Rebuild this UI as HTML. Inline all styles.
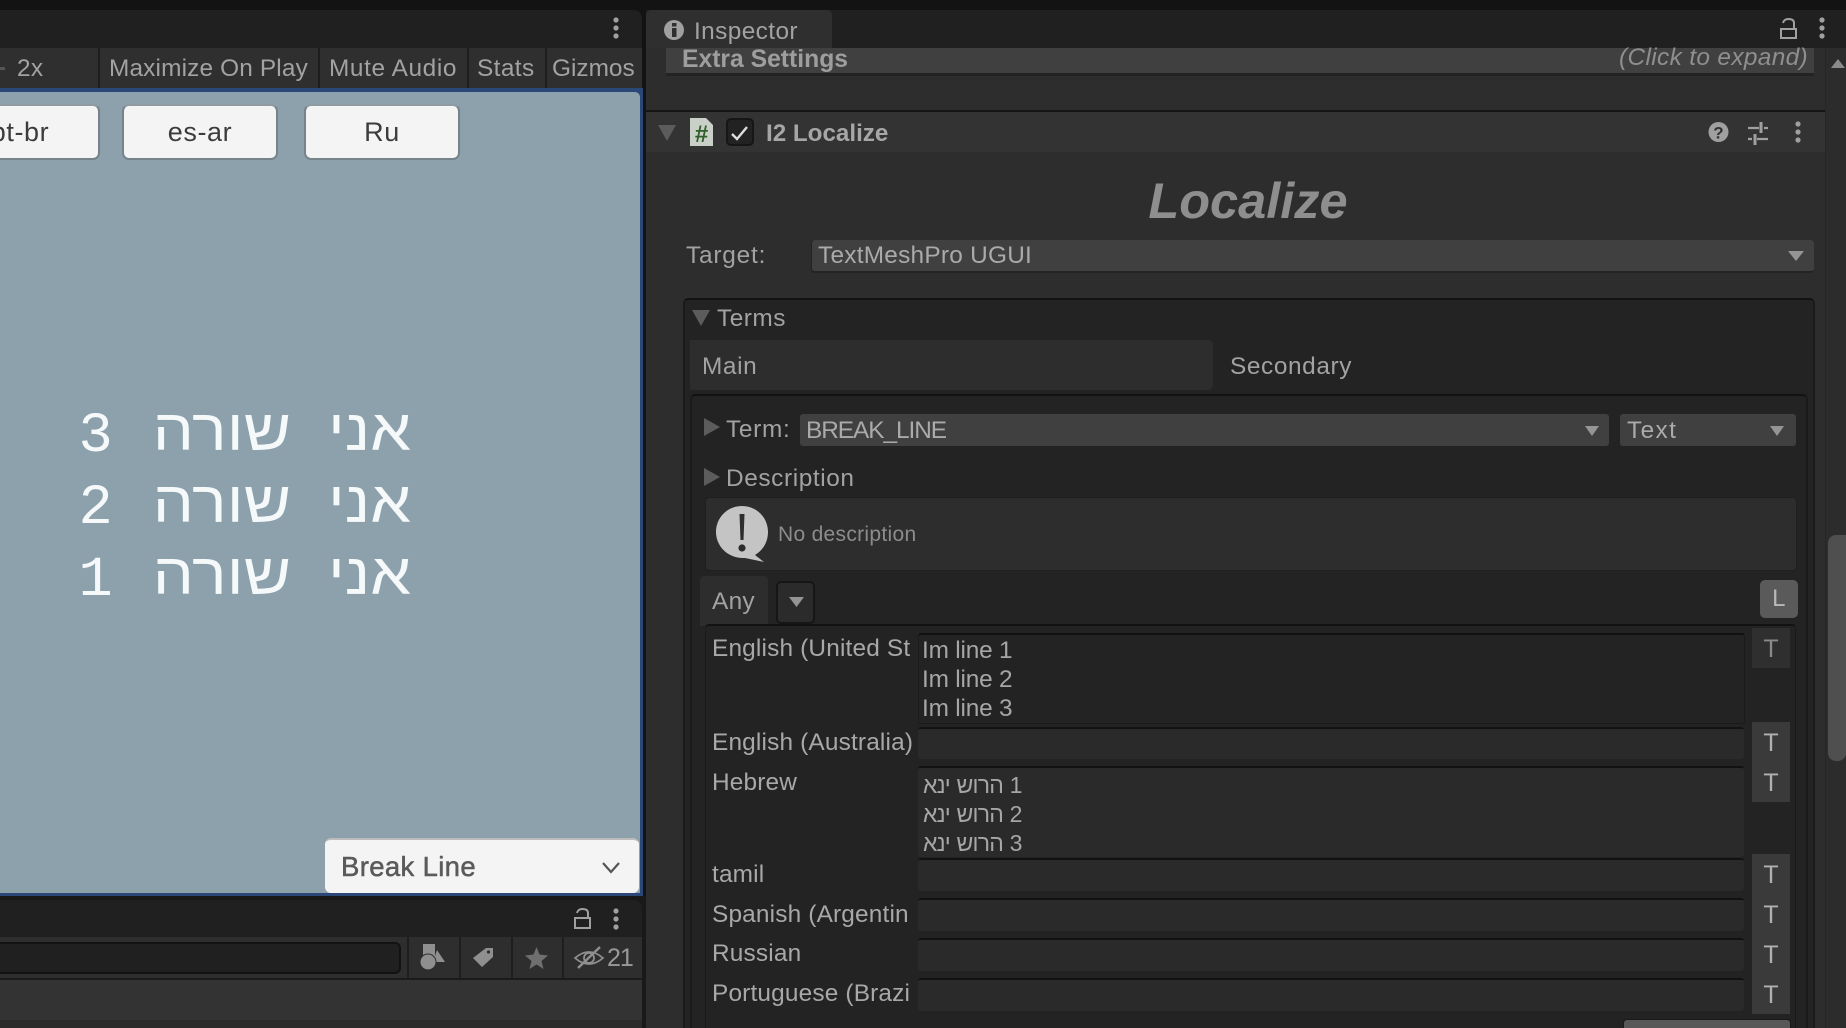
<!DOCTYPE html>
<html><head><meta charset="utf-8">
<style>
html,body{margin:0;padding:0;background:#131313;width:1846px;height:1028px;overflow:hidden}
body{position:relative;font-family:"Liberation Sans",sans-serif;font-size:24.4px;letter-spacing:.3px;color:#a2a2a2}
div,span,svg{position:absolute;box-sizing:border-box}
.t{line-height:30px;height:30px;white-space:nowrap}
.d{left:0;top:0}
.fld{left:918px;width:826px;background:#2a2a2a;border-top:2px solid #121212;border-radius:3px}
.lab{left:712px;width:198px;overflow:hidden;color:#a8a8a8;letter-spacing:.17px}
.tb{left:1752px;width:38px}
.tt{left:1752px;width:38px;text-align:center;color:#b0b0b0;font-size:25px;line-height:30px;height:30px;letter-spacing:0}
.sep{width:2px;background:#1e1e1e}
.btn{background:#f4f4f4;border:2px solid #76838b;border-top-color:#8f9aa1;border-radius:7px;height:56px;top:104px;text-align:center;color:#3c3c3c;font-size:27px;line-height:52px;letter-spacing:.6px}
.dg{left:78.5px;height:72px;line-height:72px;font-family:"Liberation Mono",monospace;font-size:57px;letter-spacing:0;color:#f6f9fa}
.hw{width:200px;height:72px;line-height:72px;font-size:58px;letter-spacing:0;color:#f6f9fa;direction:rtl;text-align:right;white-space:nowrap;transform-origin:100% 50%;transform:scaleX(1.12)}
.w1{left:211px}
.w2{left:91px}
.hf{left:922px;color:#a6a6a6;letter-spacing:-.2px}
.hb{left:923px;color:#a6a6a6;font-size:23px;unicode-bidi:bidi-override;direction:ltr;letter-spacing:-.8px;word-spacing:1px}
</style></head><body>

<!-- LEFT PANEL -->
<div style="left:0;top:10px;width:642px;height:38px;background:#202020;border-radius:0 8px 0 0"></div>
<div style="left:0;top:48px;width:642px;height:40px;background:#2f2f2f"></div>
<div class="sep" style="left:98px;top:48px;height:40px"></div>
<div class="sep" style="left:318px;top:48px;height:40px"></div>
<div class="sep" style="left:467px;top:48px;height:40px"></div>
<div class="sep" style="left:545px;top:48px;height:40px"></div>
<div style="left:0;top:67px;width:5px;height:3px;background:#555"></div>
<span class="t" style="left:17px;top:54px">2x</span>
<span class="t" style="left:109px;top:54px;letter-spacing:.15px">Maximize On Play</span>
<span class="t" style="left:329px;top:54px;letter-spacing:.6px">Mute Audio</span>
<span class="t" style="left:477px;top:54px;letter-spacing:.4px">Stats</span>
<span class="t" style="left:552px;top:54px;letter-spacing:0">Gizmos</span>
<svg class="d" width="646" height="50" style="left:0;top:0"><g fill="#a0a0a0"><circle cx="616" cy="20" r="2.6"/><circle cx="616" cy="28" r="2.6"/><circle cx="616" cy="36" r="2.6"/></g></svg>

<!-- GAME VIEW -->
<div style="left:0;top:88px;width:643px;height:808px;background:#2b4777"></div>
<div style="left:0;top:92px;width:640px;height:801px;background:#8da1ad;border-radius:0 5px 0 0"></div>
<div class="btn" style="left:-60px;width:160px">pt-br</div>
<div class="btn" style="left:122px;width:156px">es-ar</div>
<div class="btn" style="left:304px;width:156px">Ru</div>
<span class="dg" style="top:401px">3</span><span class="hw w2" style="top:395px">שורה</span><span class="hw w1" style="top:395px">אני</span>
<span class="dg" style="top:473px">2</span><span class="hw w2" style="top:467px">שורה</span><span class="hw w1" style="top:467px">אני</span>
<span class="dg" style="top:545px">1</span><span class="hw w2" style="top:539px">שורה</span><span class="hw w1" style="top:539px">אני</span>
<div style="left:325px;top:838px;width:314px;height:55px;background:#f4f4f4;border-radius:6px;border-top:2px solid #bcbcbc"></div>
<span class="t" style="left:341px;top:852px;font-size:27.5px;color:#5a5a5a;-webkit-text-stroke:.5px #5a5a5a;letter-spacing:.35px">Break Line</span>
<svg class="d" width="30" height="20" style="left:599px;top:858px"><path d="M4 5 L12 14 L20 5" fill="none" stroke="#555" stroke-width="2.2"/></svg>

<!-- BOTTOM LEFT -->
<div style="left:0;top:896px;width:646px;height:132px;background:#191919"></div>
<div style="left:0;top:900px;width:642px;height:37px;background:#202020;border-radius:0 8px 0 0"></div>
<div style="left:0;top:937px;width:642px;height:41px;background:#2e2e2e"></div>
<div style="left:0;top:942px;width:401px;height:32px;background:#202020;border:2px solid #121212;border-left:0;border-radius:0 6px 6px 0"></div>
<div class="sep" style="left:407px;top:937px;height:41px"></div>
<div class="sep" style="left:459px;top:937px;height:41px"></div>
<div class="sep" style="left:511px;top:937px;height:41px"></div>
<div class="sep" style="left:562px;top:937px;height:41px"></div>
<div style="left:0;top:978px;width:642px;height:2px;background:#1b1b1b"></div>
<div style="left:0;top:980px;width:642px;height:40px;background:#333"></div>
<div style="left:0;top:1020px;width:642px;height:8px;background:#2b2b2b"></div>
<span class="t" style="left:607px;top:943px;color:#999;font-size:25px;letter-spacing:-1px">21</span>
<svg class="d" width="646" height="1028" style="left:0;top:0">
  <g fill="none" stroke="#a0a0a0" stroke-width="2"><rect x="575" y="918" width="15" height="10"/><path d="M588 918 V913 Q588 909 582.500 909 Q578 909 577 913"/></g>
  <g fill="#a0a0a0"><circle cx="616" cy="911" r="2.6"/><circle cx="616" cy="919" r="2.6"/><circle cx="616" cy="927" r="2.6"/></g>
  <g fill="#8f8f8f"><rect x="423" y="944" width="12" height="13"/><path d="M437 950 L445 962 H433 Z"/><circle cx="428" cy="962" r="8" stroke="#2e2e2e" stroke-width="1"/></g>
  <path d="M473 958 L486 948 H493 V957 L482 967 Z" fill="#8f8f8f"/><circle cx="488.500" cy="952" r="1.6" fill="#2e2e2e"/>
  <path d="M536.500 947 L539.500 954.500 L548 955.500 L541.500 961 L543.500 969 L536.500 964.500 L529.500 969 L531.500 961 L525 955.500 L533.500 954.500 Z" fill="#6f6f6f"/>
  <g fill="none" stroke="#8f8f8f" stroke-width="1.8"><path d="M575 958 Q589 946 603 958 Q589 970 575 958 Z"/><circle cx="589" cy="958" r="5"/><path d="M578 968 L600 947" stroke-width="2.4"/></g>
</svg>

<!-- INSPECTOR -->
<div style="left:646px;top:10px;width:1200px;height:38px;background:#202020"></div>
<div style="left:646px;top:10px;width:186px;height:38px;background:#2f2f2f;border-radius:5px 5px 0 0"></div>
<span class="t" style="left:694px;top:17px;letter-spacing:.4px">Inspector</span>
<div style="left:646px;top:48px;width:1179px;height:980px;background:#2d2d2d"></div>
<div style="left:1825px;top:48px;width:21px;height:980px;background:#2c2c2c;border-left:1px solid #262626"></div>
<div style="left:1828px;top:535px;width:18px;height:226px;background:#4f4f4f;border-radius:8px 0 8px 8px"></div>
<div style="left:666px;top:48px;width:1148px;height:28px;background:#404040;border-bottom:3px solid #232323"></div>
<span class="t" style="left:682px;top:45px;font-weight:bold;color:#9e9e9e;font-size:24.7px;letter-spacing:0">Extra Settings</span>
<span class="t" style="right:38px;top:43px;font-style:italic;color:#8f8f8f;font-size:24.4px;letter-spacing:.35px">(Click to expand)</span>
<div style="left:646px;top:110px;width:1179px;height:2px;background:#151515"></div>
<div style="left:646px;top:112px;width:1179px;height:40px;background:#333"></div>
<div style="left:766px;top:119px;font-weight:bold;line-height:30px;font-size:24.2px;letter-spacing:0;color:#a6a6a6">I2 Localize</div>
<div style="left:1048px;width:400px;top:171px;height:60px;line-height:60px;text-align:center;font-weight:bold;font-style:italic;font-size:50.5px;letter-spacing:0;color:#8e8e8e">Localize</div>

<span class="t" style="left:686px;top:241px;letter-spacing:.8px">Target:</span>
<div style="left:811px;top:240px;width:1003px;height:33px;background:#404040;border-radius:4px;border-bottom:2px solid #232323;border-left:1px solid #232323"></div>
<span class="t" style="left:818px;top:241px;color:#aaa;letter-spacing:.25px">TextMeshPro UGUI</span>

<!-- TERMS -->
<div style="left:683px;top:298px;width:1132px;height:730px;background:#232323;border-top:2px solid #121212;border-left:2px solid #1a1a1a;border-right:2px solid #1a1a1a;border-radius:5px 5px 0 0"></div>
<span class="t" style="left:717px;top:304px;letter-spacing:.5px">Terms</span>
<div style="left:690px;top:340px;width:523px;height:50px;background:#2d2d2d;border-radius:0 5px 5px 0"></div>
<span class="t" style="left:702px;top:352px;letter-spacing:.6px">Main</span>
<span class="t" style="left:1230px;top:352px;letter-spacing:.6px">Secondary</span>
<div style="left:690px;top:394px;width:1118px;height:634px;background:#232323;border-top:2px solid #121212;border-left:2px solid #1a1a1a;border-right:2px solid #1a1a1a;border-radius:5px 5px 0 0"></div>
<span class="t" style="left:726px;top:415px;letter-spacing:.7px">Term:</span>
<div style="left:800px;top:414px;width:809px;height:32px;background:#404040;border-radius:3px"></div>
<span class="t" style="left:806px;top:416px;color:#aaa;letter-spacing:-1.05px">BREAK_LINE</span>
<div style="left:1620px;top:414px;width:176px;height:32px;background:#404040;border-radius:3px"></div>
<span class="t" style="left:1627px;top:416px;color:#aaa;letter-spacing:1.4px">Text</span>
<span class="t" style="left:726px;top:464px;letter-spacing:.6px">Description</span>
<div style="left:705px;top:497px;width:1092px;height:74px;background:#2d2d2d;border:1px solid #1f1f1f;border-radius:4px"></div>
<span class="t" style="left:778px;top:520px;font-size:21px;letter-spacing:.3px;color:#8c8c8c">No description</span>
<div style="left:700px;top:576px;width:68px;height:50px;background:#2d2d2d;border-radius:4px 4px 0 0"></div>
<span class="t" style="left:712px;top:587px">Any</span>
<div style="left:776px;top:581px;width:39px;height:43px;background:#2b2b2b;border:2px solid #161616;border-radius:5px"></div>
<div style="left:1760px;top:580px;width:38px;height:38px;background:#5a5a5a;border-radius:5px;text-align:center;line-height:38px;color:#b8b8b8;font-size:24px">L</div>

<!-- LANG BOX -->
<div style="left:705px;top:624px;width:1091px;height:404px;background:#232323;border-top:2px solid #121212;border-left:1px solid #1a1a1a;border-right:1px solid #1a1a1a;border-radius:4px 4px 0 0"></div>
<span class="t lab" style="top:634px">English (United St</span>
<span class="t lab" style="top:728px;width:205px">English (Australia)</span>
<span class="t lab" style="top:768px">Hebrew</span>
<span class="t lab" style="top:860px">tamil</span>
<span class="t lab" style="top:900px">Spanish (Argentin</span>
<span class="t lab" style="top:939px">Russian</span>
<span class="t lab" style="top:979px">Portuguese (Brazi</span>

<div class="fld" style="top:633px;height:91px;background:#232323;border:1px solid #1b1b1b;border-top:2px solid #111;width:827px"></div>
<div class="fld" style="top:727px;height:32px"></div>
<div class="fld" style="top:766px;height:91px"></div>
<div class="fld" style="top:858px;height:33px"></div>
<div class="fld" style="top:898px;height:33px"></div>
<div class="fld" style="top:938px;height:33px"></div>
<div class="fld" style="top:978px;height:33px"></div>

<span class="t hf" style="top:636px">Im line 1</span>
<span class="t hf" style="top:665px">Im line 2</span>
<span class="t hf" style="top:694px">Im line 3</span>
<span class="t hb" style="top:770px">אני שורה 1</span>
<span class="t hb" style="top:799px">אני שורה 2</span>
<span class="t hb" style="top:828px">אני שורה 3</span>

<div class="tb" style="top:628px;height:40px;background:#2f2f2f"></div>
<div class="tb" style="top:722px;height:80px;background:#3a3a3a"></div>
<div class="tb" style="top:854px;height:160px;background:#3a3a3a"></div>
<div class="tt" style="top:634px;color:#8a8a8a">T</div>
<div class="tt" style="top:728px">T</div>
<div class="tt" style="top:768px">T</div>
<div class="tt" style="top:860px">T</div>
<div class="tt" style="top:900px">T</div>
<div class="tt" style="top:940px">T</div>
<div class="tt" style="top:980px">T</div>
<div style="left:1623px;top:1019px;width:168px;height:9px;background:#585858;border:1px solid #1a1a1a;border-bottom:0;border-radius:4px 4px 0 0"></div>

<!-- INSPECTOR ICONS -->
<svg class="d" width="1846" height="1028" style="left:0;top:0">
  <!-- info -->
  <circle cx="674" cy="30" r="10" fill="#a0a0a0"/>
  <rect x="672" y="28" width="4.500" height="9" fill="#2f2f2f"/><rect x="672" y="23" width="4.500" height="3.500" fill="#2f2f2f"/>
  <!-- lock -->
  <g fill="none" stroke="#a0a0a0" stroke-width="2"><rect x="1781" y="29" width="15" height="9"/><path d="M1794 29 V23 Q1794 19 1788.500 19 Q1784 19 1783 23"/></g>
  <g fill="#a0a0a0"><circle cx="1822" cy="20" r="2.6"/><circle cx="1822" cy="28" r="2.6"/><circle cx="1822" cy="36" r="2.6"/></g>
  <path d="M1831 68 L1838 59 L1845 68 Z" fill="#8a8a8a"/>
  <!-- header -->
  <path d="M658 125 H676 L667 141 Z" fill="#5c5c5c"/>
  <path d="M690 118 H706 L713 125 V146 H690 Z" fill="#c8d0c8"/>
  <text x="701.500" y="142" text-anchor="middle" font-family="Liberation Sans" font-size="24" font-weight="bold" fill="#2f5f2a" letter-spacing="0">#</text>
  <rect x="727" y="119" width="26" height="26" rx="4" fill="#222" stroke="#161616" stroke-width="2"/>
  <path d="M732 134 L737 139 L747 127" fill="none" stroke="#ddd" stroke-width="2.4"/>
  <circle cx="1718.500" cy="132" r="10" fill="#a0a0a0"/>
  <text x="1718.500" y="138.500" text-anchor="middle" font-family="Liberation Sans" font-size="17" font-weight="bold" fill="#333" letter-spacing="0">?</text>
  <g stroke="#a0a0a0" stroke-width="2.2" fill="none"><path d="M1748 128 H1759 M1764 128 H1768 M1748 139 H1752 M1757 139 H1768"/><path d="M1761 122 V133 M1755 134 V145" stroke-width="3"/></g>
  <g fill="#a0a0a0"><circle cx="1798" cy="124" r="2.6"/><circle cx="1798" cy="132" r="2.6"/><circle cx="1798" cy="140" r="2.6"/></g>
  <!-- dropdown arrows -->
  <g fill="#959595">
    <path d="M1788 251 H1804 L1796 261 Z"/>
    <path d="M1585 426 H1599 L1592 436 Z"/>
    <path d="M1770 426 H1784 L1777 436 Z"/>
    <path d="M789 597 H804 L796.500 607 Z"/>
  </g>
  <!-- foldouts -->
  <g fill="#5c5c5c">
    <path d="M692 310 H710 L701 326 Z"/>
    <path d="M704 418 L720 427 L704 436 Z"/>
    <path d="M704 468 L720 477 L704 486 Z"/>
  </g>
  <!-- bubble -->
  <path d="M742 506 C757 506 768 518 768 532 C768 543 762 551 755 555 L764 562 L745 558 C729 559 716 547 716 532 C716 518 727 506 742 506 Z" fill="#c4c4c4"/>
  <path d="M739.500 514 H744.500 L743.500 540 H740.500 Z" fill="#2d2d2d"/><circle cx="742" cy="548" r="3.600" fill="#2d2d2d"/>
</svg>
</body></html>
